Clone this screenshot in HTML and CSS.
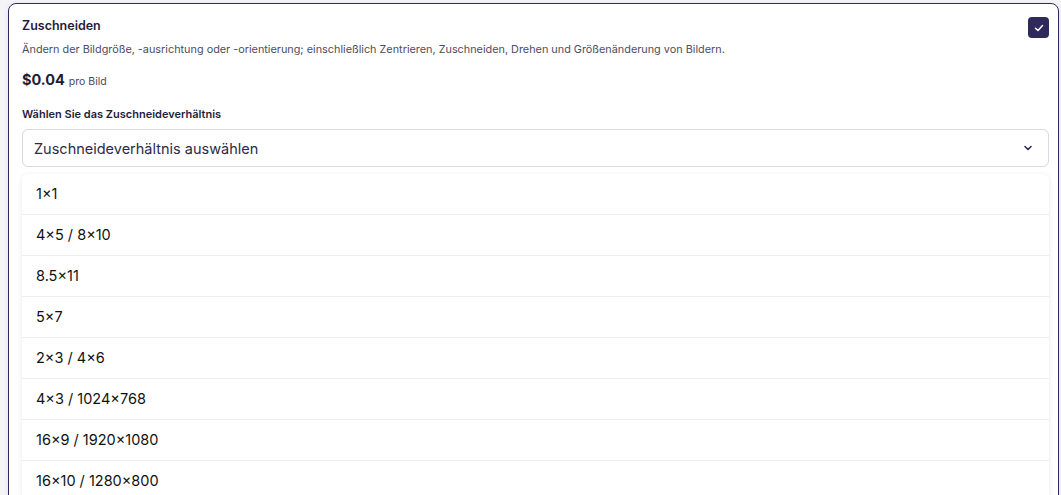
FILE: index.html
```html
<!DOCTYPE html>
<html lang="de">
  <head>
    <meta charset="UTF-8" />
    <meta name="viewport" content="width=device-width, initial-scale=1.0" />
    <title>Zuschneiden</title>
    <link rel="stylesheet" href="styles.css">
  </head>
  <body>
    <div class="option-card">
      <div class="option-head">
        <div>
          <h3 class="option-title">Zuschneiden</h3>
          <p class="option-desc">
            Ändern der Bildgröße, -ausrichtung oder -orientierung; einschließlich Zentrieren, Zuschneiden, Drehen und Größenänderung von Bildern.
          </p>
        </div>
        <span class="check">
          <svg width="12" height="12" viewBox="0 0 12 12">
            <path d="M2.5 6.2 L5 8.5 L9.5 3.5" fill="none" stroke="#fff" stroke-width="1.5" stroke-linecap="round" stroke-linejoin="round" />
          </svg>
        </span>
      </div>

      <div class="price"><strong>$0.04</strong> pro Bild</div>

      <label class="field-label">Wählen Sie das Zuschneideverhältnis</label>
      <div class="select">
        <span>Zuschneideverhältnis auswählen</span>
        <svg width="12" height="12" viewBox="0 0 12 12">
          <path d="M3 4.5 L6 7.5 L9 4.5" fill="none" stroke="#2e2a5a" stroke-width="1.6" stroke-linecap="round" stroke-linejoin="round" />
        </svg>
      </div>

      <ul class="menu">
        <li>1×1</li>
        <li>4×5 / 8×10</li>
        <li>8.5×11</li>
        <li>5×7</li>
        <li>2×3 / 4×6</li>
        <li>4×3 / 1024×768</li>
        <li>16×9 / 1920×1080</li>
        <li>16×10 / 1280×800</li>
      </ul>
    </div>
  </body>
</html>
```

FILE: styles.css
```css
* {
  margin: 0;
  padding: 0;
  box-sizing: border-box;
}
body {
  font-family: Inter, "Noto Sans", sans-serif;
  background-color: #f5f5f8;
  padding: 3px 2px 0 8px;
  color: #1f1d3a;
}

.option-card {
  background-color: #fff;
  border: 1px solid #2e2a5a;
  border-radius: 8px;
  padding: 12px 9px 20px 13px;
  box-shadow: 0 1px 6px rgba(40, 40, 80, 0.08);
}

.option-head {
  display: flex;
  justify-content: space-between;
  align-items: flex-start;
}

.option-title {
  font-size: 12.5px;
  font-weight: 600;
  color: #1f1d3a;
  line-height: 20px;
}

.option-desc {
  font-size: 10.85px;
  color: #4d4c62;
  line-height: 16px;
  margin-top: 5px;
}

.check {
  width: 21px;
  height: 21px;
  margin-top: 1px;
  border-radius: 4px;
  background-color: #2e2a5a;
  display: flex;
  align-items: center;
  justify-content: center;
}

.price {
  margin-top: 14px;
  font-size: 10.5px;
  color: #4a4960;
}
.price strong {
  font-size: 14.5px;
  font-weight: 700;
  color: #1f1d3a;
  margin-right: 1px;
}

.field-label {
  display: block;
  margin-top: 19px;
  font-size: 11px;
  font-weight: 600;
  color: #1f1d3a;
}

.select {
  margin-top: 8px;
  height: 38px;
  border: 1px solid #d9d9df;
  border-radius: 6px;
  padding: 0 14px 0 11px;
  display: flex;
  align-items: center;
  justify-content: space-between;
  font-size: 14.5px;
  color: #2c2a48;
}

.menu {
  list-style: none;
  margin-top: 7px;
  border-radius: 6px;
  box-shadow: 0 1px 5px rgba(40, 40, 80, 0.1);
}
.menu li {
  height: 41px;
  line-height: 40px;
  padding-left: 14px;
  font-size: 14.5px;
  color: #121212;
  border-bottom: 1px solid #eeeef0;
}
```
